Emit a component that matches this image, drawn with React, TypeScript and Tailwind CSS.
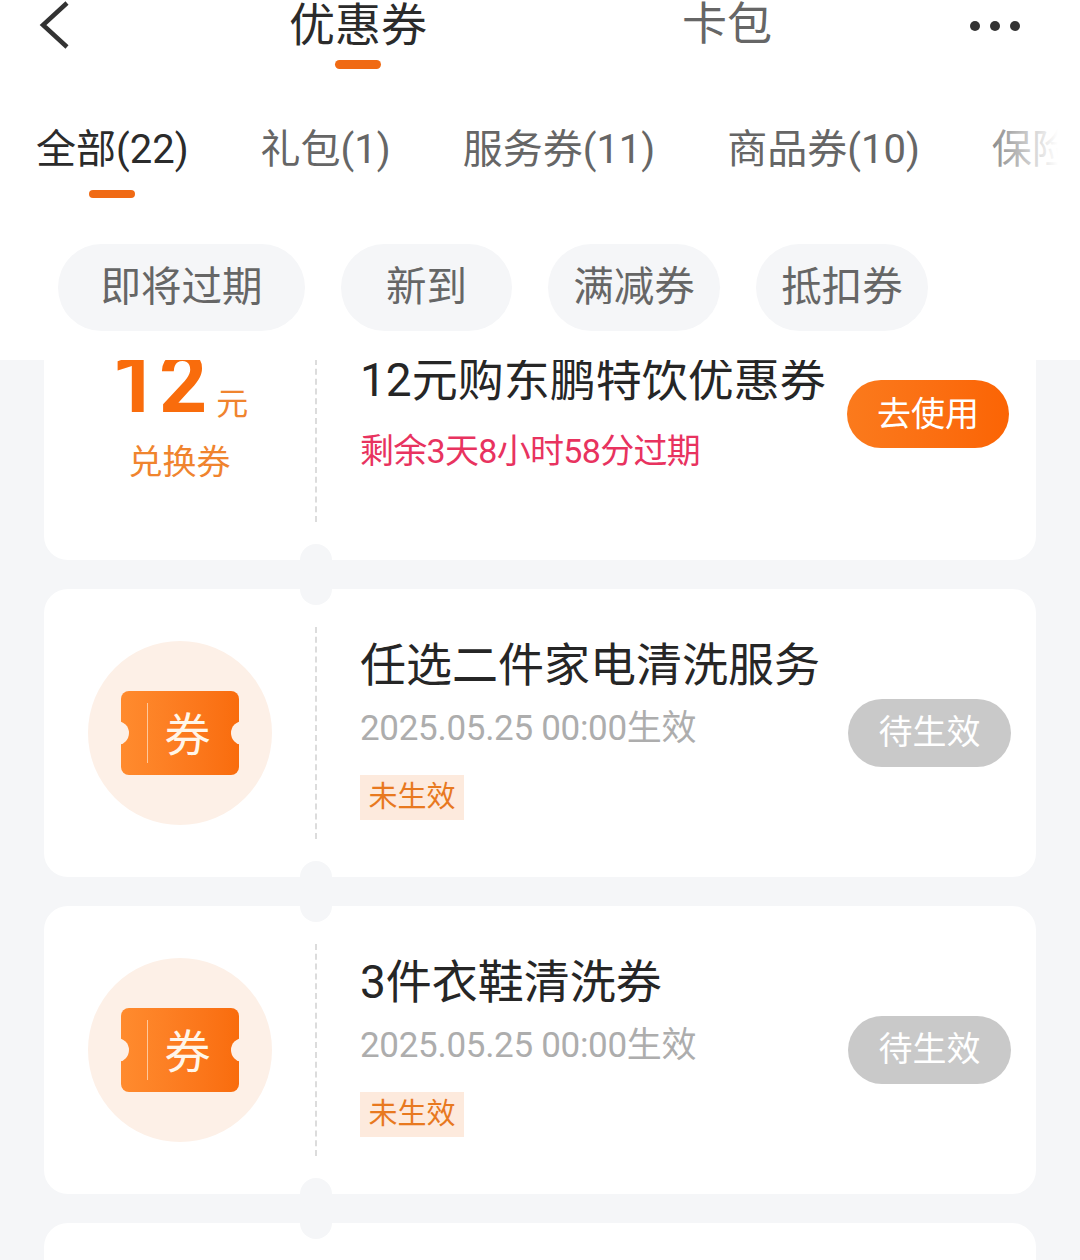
const fontStack = 'font-["Roboto","Noto_Sans_CJK_SC",sans-serif]';

const tabs = [
  { label: '全部(22)', active: true },
  { label: '礼包(1)', active: false },
  { label: '服务券(11)', active: false },
  { label: '商品券(10)', active: false },
  { label: '保险券(0)', active: false },
];

const chips = [
  { label: '即将过期', width: 'w-[247px]' },
  { label: '新到', width: 'w-[171px]' },
  { label: '满减券', width: 'w-[172px]' },
  { label: '抵扣券', width: 'w-[172px]' },
];

function Ticket() {
  return (
    <div className="flex h-[184px] w-[184px] items-center justify-center rounded-full bg-[#fdf0e7]">
      <div className="relative flex h-[84px] w-[118px] items-center overflow-hidden rounded-lg bg-gradient-to-r from-[#ff8b2e] to-[#f96c0c]">
        <span className="absolute left-[-16px] top-[30px] h-[24px] w-[24px] rounded-full bg-[#fdf0e7]" />
        <span className="absolute right-[-16px] top-[30px] h-[24px] w-[24px] rounded-full bg-[#fdf0e7]" />
        <span className="ml-[26px] h-[60px] w-[1px] bg-[#ffc89a]" />
        <span className="ml-[17px] mt-[4px] text-[46px] leading-none text-[#fff6ea]">券</span>
      </div>
    </div>
  );
}

function CouponCard({
  title,
  children,
  left,
  action,
  first,
}: {
  title: string;
  children: React.ReactNode;
  left: React.ReactNode;
  action: string;
  first?: boolean;
}) {
  return (
    <div className={`relative flex h-[288px] w-[992px] shrink-0 items-center rounded-[24px] bg-white ${first ? 'mt-[-88.5px]' : ''}`}>
      <span className="absolute left-[256px] top-[-16px] h-[32px] w-[32px] rounded-full bg-[#f5f6f8]" />
      <span className="absolute bottom-[-16px] left-[256px] h-[32px] w-[32px] rounded-full bg-[#f5f6f8]" />
      <div className="flex w-[271px] shrink-0 justify-center">{left}</div>
      <div className="h-[212px] w-0 border-l-2 border-dashed border-[#dcdcdc]" />
      <div className="ml-[43px] flex-1 pb-[7px]">
        <div className="whitespace-nowrap text-[46px] leading-[54px] text-[#262626]">{title}</div>
        {children}
      </div>
      <div
        className={`flex h-[68px] shrink-0 items-center justify-center rounded-full text-[34px] text-white ${
          action === '去使用' ? 'mb-[3px] mr-[27px] w-[162px] bg-gradient-to-r from-[#fb7a1c] to-[#fb6404]' : 'mr-[25px] w-[163px] bg-[#c9c9c9]'
        }`}
      >
        {action}
      </div>
    </div>
  );
}

function PendingInfo() {
  return (
    <>
      <div className="mt-[17px] whitespace-nowrap text-[35px] leading-[40px] tracking-[-0.3px] text-[#adadad]">2025.05.25 00:00生效</div>
      <div className="mt-[26px] flex h-[45px] w-[104px] items-center justify-center bg-[#fdeadd] text-[29px] text-[#e8791f]">未生效</div>
    </>
  );
}

export default function App() {
  return (
    <div className={`flex h-[1260px] w-[1080px] flex-col overflow-hidden bg-[#f5f6f8] ${fontStack}`}>
      <div className="relative z-10 h-[360px] shrink-0 bg-white">
        <div className="flex h-[100px] items-start">
          <svg className="ml-[39px] shrink-0" width="32" height="50" viewBox="0 0 32 50" fill="none">
            <path d="M28 3 L4 25 L28 47" stroke="#333" strokeWidth="4.5" />
          </svg>
          <div className="ml-[219px] flex w-[136px] flex-col items-center">
            <span className="whitespace-nowrap text-[46px] leading-[50px] text-[#2b2b2b]">优惠券</span>
            <span className="mt-[10px] h-[9px] w-[46px] rounded-full bg-[#f06a14]" />
          </div>
          <span className="ml-[256px] whitespace-nowrap text-[45px] leading-[50px] text-[#666]">卡包</span>
          <div className="ml-[198px] mt-[21px] flex gap-[10px]">
            <span className="h-[10px] w-[10px] rounded-full bg-[#333]" />
            <span className="h-[10px] w-[10px] rounded-full bg-[#333]" />
            <span className="h-[10px] w-[10px] rounded-full bg-[#333]" />
          </div>
        </div>

        <div className="relative mt-[25px] flex gap-[72px] overflow-hidden pl-[36px]">
          {tabs.map((tab) => (
            <div key={tab.label} className="flex shrink-0 flex-col items-center">
              <span className={`whitespace-nowrap text-[40px] leading-[50px] ${tab.active ? 'text-[#2b2b2b]' : 'text-[#666]'}`}>{tab.label}</span>
              <span className={`mt-[15px] h-[8px] w-[46px] rounded-full ${tab.active ? 'bg-[#f06a14]' : 'bg-transparent'}`} />
            </div>
          ))}
          <div className="absolute bottom-0 right-0 top-0 w-[110px] bg-gradient-to-r from-white/0 to-white to-80%" />
        </div>

        <div className="mt-[46px] flex gap-[36px] pl-[58px]">
          {chips.map((chip) => (
            <div key={chip.label} className={`flex h-[87px] items-center justify-center rounded-full bg-[#f5f6f8] text-[40.5px] text-[#666] ${chip.width}`}>
              {chip.label}
            </div>
          ))}
        </div>
      </div>

      <div className="flex flex-1 flex-col gap-[29px] overflow-hidden pl-[44px]">
        <CouponCard
          first
          title="12元购东鹏特饮优惠券"
          action="去使用"
          left={
            <div className="flex flex-col items-center">
              <div className="flex items-end">
                <span className='font-["Liberation_Sans_Narrow","Roboto",sans-serif] text-[84px] font-bold leading-[70px] text-[#f96c0c]'>12</span>
                <span className="mb-[-3px] ml-[9px] text-[32px] leading-[36px] text-[#f0842e]">元</span>
              </div>
              <span className="mt-[23px] text-[34px] leading-[40px] text-[#f0842e]">兑换券</span>
            </div>
          }
        >
          <div className="mt-[24px] whitespace-nowrap text-[34px] leading-[40px] tracking-[-0.7px] text-[#e8335f]">剩余3天8小时58分过期</div>
        </CouponCard>
        <CouponCard title="任选二件家电清洗服务" action="待生效" left={<Ticket />}>
          <PendingInfo />
        </CouponCard>
        <CouponCard title="3件衣鞋清洗券" action="待生效" left={<Ticket />}>
          <PendingInfo />
        </CouponCard>
        <CouponCard title="" action="待生效" left={<Ticket />}>
          <PendingInfo />
        </CouponCard>
      </div>
    </div>
  );
}
